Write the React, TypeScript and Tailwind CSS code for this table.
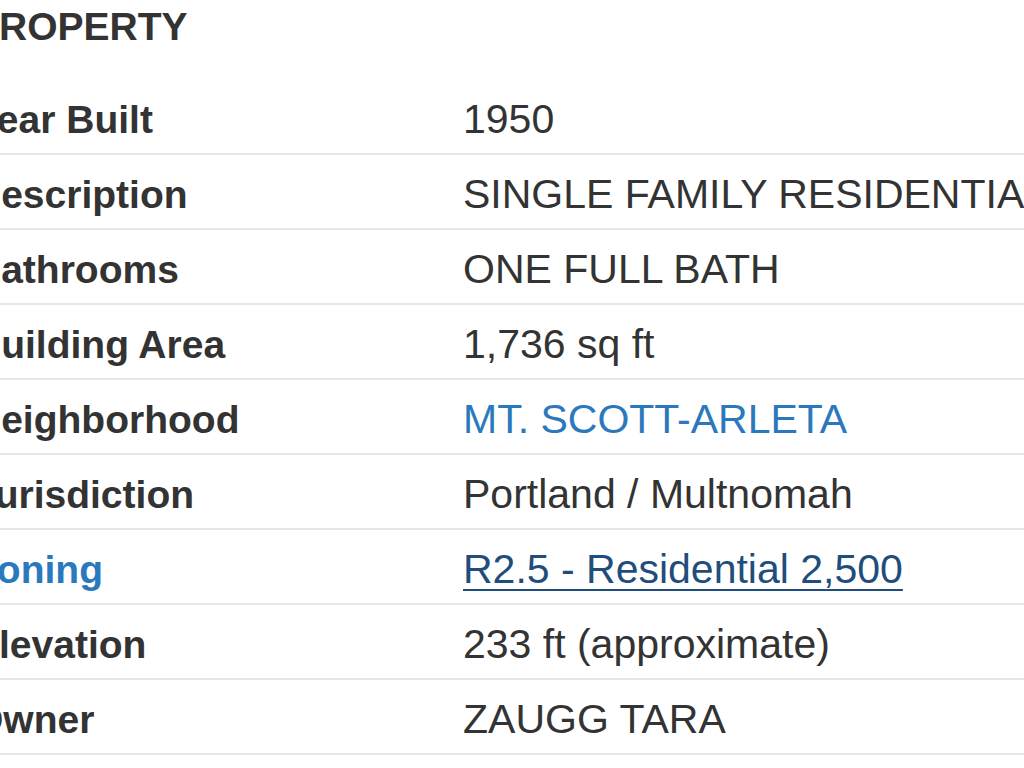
const rows: { label: string; value: string; kind?: "link" | "zoning" }[] = [
  { label: "Year Built", value: "1950" },
  { label: "Description", value: "SINGLE FAMILY RESIDENTIAL" },
  { label: "Bathrooms", value: "ONE FULL BATH" },
  { label: "Building Area", value: "1,736 sq ft" },
  { label: "Neighborhood", value: "MT. SCOTT-ARLETA", kind: "link" },
  { label: "Jurisdiction", value: "Portland / Multnomah" },
  { label: "Zoning", value: "R2.5 - Residential 2,500", kind: "zoning" },
  { label: "Elevation", value: "233 ft (approximate)" },
  { label: "Owner", value: "ZAUGG TARA" },
];

export default function App() {
  return (
    <div className="w-[1024px] h-[768px] overflow-hidden bg-white text-[#333] font-['Liberation_Sans',Arial,sans-serif]">
      <div className="ml-[-27px] w-[1200px]">
        <h2 className="h-[80px] pt-[5px] text-[39px] leading-[44px] font-bold whitespace-nowrap">PROPERTY</h2>
        {rows.map((r) => (
          <div
            key={r.label}
            className="grid grid-cols-[490px_1fr] h-[75px] pt-[7px] items-center border-b-2 border-[#e6e6e6] whitespace-nowrap"
          >
            <div
              className={
                r.kind === "zoning"
                  ? "text-[39px] font-bold text-[#2b79bd]"
                  : "text-[39px] font-bold"
              }
            >
              {r.label}
            </div>
            <div
              className={
                r.kind === "link"
                  ? "text-[41px] text-[#2b79bd]"
                  : r.kind === "zoning"
                  ? "text-[41px] text-[#1f4e7d] underline decoration-2 underline-offset-[6px]"
                  : "text-[41px]"
              }
            >
              {r.value}
            </div>
          </div>
        ))}
      </div>
    </div>
  );
}
